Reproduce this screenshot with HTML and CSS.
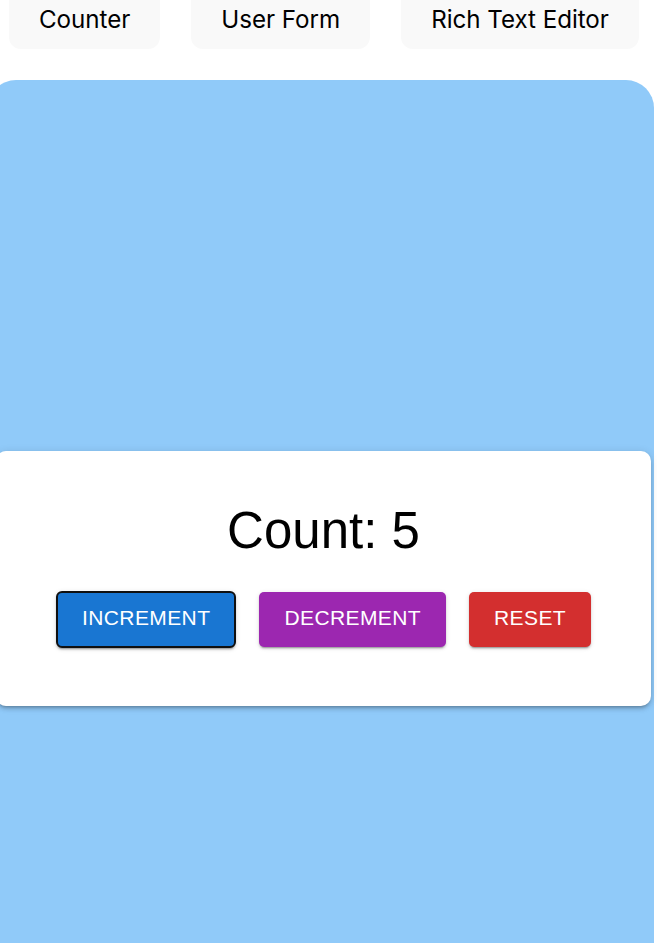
FILE: index.html
```html
<!DOCTYPE html>
<html>
<head>
<meta charset="utf-8">
<link rel="stylesheet" href="styles.css">
</head>
<body>
<nav class="tabs">
  <button class="tab">Counter</button>
  <button class="tab">User Form</button>
  <button class="tab">Rich Text Editor</button>
</nav>
<main class="panel">
  <section class="card">
    <h3 class="count">Count: 5</h3>
    <div class="actions">
      <button class="btn btn-blue focused">Increment</button>
      <button class="btn btn-purple">Decrement</button>
      <button class="btn btn-red">Reset</button>
    </div>
  </section>
</main>
</body>
</html>
```

FILE: styles.css
```css
html, body {
  margin: 0;
  padding: 0;
  background: #ffffff;
  overflow: hidden;
}
body {
  width: 657px;
  height: 943px;
  font-family: "Liberation Sans", Arial, sans-serif;
}
.tabs {
  display: flex;
  gap: 31px;
  padding-left: 9px;
  margin-top: -11px;
}
.tab {
  height: 60px;
  padding: 0 30px;
  border: none;
  border-radius: 12px;
  background: #f9f9f9;
  font-family: Inter, "Noto Sans", sans-serif;
  font-size: 24.2px;
  letter-spacing: -0.05px;
  color: #000;
}
.panel {
  margin-top: 31px;
  margin-left: -12px;
  width: 666px;
  min-height: 997px;
  background: #90caf9;
  border-radius: 28px 28px 0 0;
  display: flex;
  align-items: center;
  justify-content: flex-end;
  padding-right: 3px;
  box-sizing: border-box;
}
.card {
  width: 655px;
  height: 255px;
  box-sizing: border-box;
  background: #fff;
  border-radius: 10px;
  box-shadow: 0 3px 3px -2px rgba(0,0,0,0.2), 0 3px 4px 0 rgba(0,0,0,0.14), 0 1px 8px 0 rgba(0,0,0,0.12);
  padding-top: 50px;
  display: flex;
  flex-direction: column;
  align-items: center;
}
.count {
  margin: 0;
  font-weight: 400;
  font-size: 51px;
  line-height: 60px;
  color: #000;
}
.actions {
  margin-top: 30px;
  display: flex;
  gap: 23px;
  align-items: center;
}
.btn {
  height: 55px;
  padding: 0 25px 3px;
  border: none;
  border-radius: 5px;
  color: #fff;
  font-family: "Liberation Sans", Arial, sans-serif;
  font-size: 21px;
  letter-spacing: 0.4px;
  text-transform: uppercase;
  box-shadow: 0 3px 1px -2px rgba(0,0,0,0.2), 0 2px 2px 0 rgba(0,0,0,0.14), 0 1px 5px 0 rgba(0,0,0,0.12);
}
.btn-blue { background: #1976d2; }
.btn-purple { background: #9c27b0; }
.btn-red { background: #d32f2f; }
.focused {
  height: 57px;
  padding: 0 24px 3px;
  border: 2px solid #101010;
  border-radius: 6px;
}
```
